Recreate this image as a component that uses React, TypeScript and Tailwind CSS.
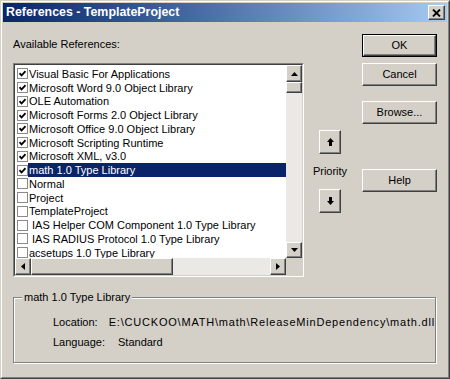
import React from "react";

const items = [
  { name: "Visual Basic For Applications", checked: true },
  { name: "Microsoft Word 9.0 Object Library", checked: true },
  { name: "OLE Automation", checked: true },
  { name: "Microsoft Forms 2.0 Object Library", checked: true },
  { name: "Microsoft Office 9.0 Object Library", checked: true },
  { name: "Microsoft Scripting Runtime", checked: true },
  { name: "Microsoft XML, v3.0", checked: true },
  { name: "math 1.0 Type Library", checked: true, selected: true },
  { name: "Normal", checked: false },
  { name: "Project", checked: false },
  { name: "TemplateProject", checked: false },
  { name: "\u00a0IAS Helper COM Component 1.0 Type Library", checked: false },
  { name: "\u00a0IAS RADIUS Protocol 1.0 Type Library", checked: false },
  { name: "acsetups 1.0 Type Library", checked: false },
];

const raised =
  "border border-t-white border-l-white border-r-[#404040] border-b-[#404040] shadow-[inset_-1px_-1px_0_#808080] bg-[#d4d0c8]";

function Arrow({ dir }: { dir: "up" | "down" | "left" | "right" }) {
  const pts = {
    up: "3.5,0 7,4 0,4",
    down: "0,0 7,0 3.5,4",
    left: "4,0 4,7 0,3.5",
    right: "0,0 4,3.5 0,7",
  }[dir];
  const vertical = dir === "up" || dir === "down";
  return (
    <svg width={vertical ? 7 : 4} height={vertical ? 4 : 7} viewBox={vertical ? "0 0 7 4" : "0 0 4 7"}>
      <polygon points={pts} fill="#000" />
    </svg>
  );
}

function ScrollButton({ dir, className }: { dir: "up" | "down" | "left" | "right"; className: string }) {
  return (
    <div className={`${raised} ${className} flex items-center justify-center shrink-0`}>
      <Arrow dir={dir} />
    </div>
  );
}

function PriorityArrow({ up }: { up: boolean }) {
  return (
    <svg width="7" height="8" viewBox="0 0 7 8">
      {up ? (
        <polygon points="3.5,0 7,4 5,4 5,8 2,8 2,4 0,4" fill="#000" />
      ) : (
        <polygon points="2,0 5,0 5,4 7,4 3.5,8 0,4 2,4" fill="#000" />
      )}
    </svg>
  );
}

function CheckBox({ checked }: { checked: boolean }) {
  return (
    <div className="w-[11px] h-[11px] shrink-0 border border-[#8a8a8a] bg-white flex items-center justify-center">
      {checked && (
        <svg width="7" height="7" viewBox="0 0 7 7">
          <path d="M0.5 3.2 L2.6 5.4 L6.5 1.2" stroke="#000" strokeWidth="1.7" fill="none" />
        </svg>
      )}
    </div>
  );
}

function Button({ label, isDefault }: { label: string; isDefault?: boolean }) {
  return (
    <div
      className={`w-[75px] h-[23px] flex items-center justify-center text-[11px] text-black ${
        isDefault ? "border border-black" : ""
      }`}
    >
      <div className={`${raised} w-full h-full flex items-center justify-center`}>{label}</div>
    </div>
  );
}

export default function App() {
  return (
    <div className="w-[450px] h-[379px] bg-[#d4d0c8] border border-t-[#d4d0c8] border-l-[#d4d0c8] border-r-[#404040] border-b-[#404040] font-['Liberation_Sans',Arial,sans-serif] text-[11px] text-black overflow-hidden">
      <div className="h-full border border-t-white border-l-white border-r-[#808080] border-b-[#808080] p-px flex flex-col">
        {/* Title bar */}
        <div className="h-[19px] shrink-0 bg-gradient-to-r from-[#0a246a] to-[#a6caf0] flex items-center justify-between pl-[3px] pr-[2px]">
          <span className="text-white font-bold text-[12.4px] leading-none">References - TemplateProject</span>
          <div className={`${raised} w-[17px] h-[15px] flex items-center justify-center`}>
            <svg width="9" height="8" viewBox="0 0 9 8">
              <path d="M1 0.5 L8 7.5 M8 0.5 L1 7.5" stroke="#000" strokeWidth="1.8" />
            </svg>
          </div>
        </div>

        {/* Body */}
        <div className="flex pt-[12px] pl-[10px]">
          {/* Left column */}
          <div className="flex flex-col w-[291px]">
            <div className="mt-[4px] h-[13px] leading-[13px]">Available References:</div>
            <div className="mt-[12px] h-[214px] border border-t-[#808080] border-l-[#808080] border-r-white border-b-white">
              <div className="h-full border border-t-[#404040] border-l-[#404040] border-r-[#d4d0c8] border-b-[#d4d0c8] bg-white flex flex-col">
                <div className="flex h-[193px]">
                  <div className="flex-1 overflow-hidden pt-[2px] pl-[2px]">
                    {items.map((it) => (
                      <div key={it.name} className="flex items-center h-[13.75px]">
                        <CheckBox checked={it.checked} />
                        <div
                          className={`flex-1 h-[14px] leading-[14px] pl-px whitespace-nowrap ${
                            it.selected ? "bg-[#0a246a] text-white" : ""
                          }`}
                        >
                          {it.name}
                        </div>
                      </div>
                    ))}
                  </div>
                  <div className="w-[16px] flex flex-col bg-[#ebe9e5]">
                    <ScrollButton dir="up" className="h-[17px]" />
                    <div className={`${raised} h-[11px]`} />
                    <div className="flex-1" />
                    <ScrollButton dir="down" className="h-[16px]" />
                  </div>
                </div>
                <div className="flex h-[17px]">
                  <ScrollButton dir="left" className="w-[16px]" />
                  <div className="flex-1 flex bg-[#ebe9e5]">
                    <div className={`${raised} w-[142px]`} />
                  </div>
                  <ScrollButton dir="right" className="w-[16px]" />
                  <div className="w-[16px] bg-[#d4d0c8]" />
                </div>
              </div>
            </div>
          </div>

          {/* Priority column */}
          <div className="ml-[8px] w-[36px] flex flex-col items-center">
            <div className={`${raised} mt-[96px] w-[22px] h-[24px] flex items-center justify-center`}>
              <PriorityArrow up />
            </div>
            <div className="mt-[11px] h-[13px] leading-[13px]">Priority</div>
            <div className={`${raised} mt-[11px] w-[22px] h-[24px] flex items-center justify-center`}>
              <PriorityArrow up={false} />
            </div>
          </div>

          {/* Buttons */}
          <div className="ml-[14px] flex flex-col">
            <Button label="OK" isDefault />
            <div className="mt-[6px]">
              <Button label="Cancel" />
            </div>
            <div className="mt-[15px]">
              <Button label="Browse..." />
            </div>
            <div className="mt-[45px]">
              <Button label="Help" />
            </div>
          </div>
        </div>

        {/* Group box */}
        <div className="relative mt-[20px] ml-[10px] w-[423px] h-[66px] border border-[#808080] shadow-[inset_1px_1px_0_#fff,1px_1px_0_#fff] pt-[18px] pl-[39px]">
          <div className="absolute left-[8px] top-[-7px] px-[2px] bg-[#d4d0c8] leading-[13px]">math 1.0 Type Library</div>
          <div className="flex h-[13px] leading-[13px]">
            <span className="w-[60px]">Location:</span>
            <span className="tracking-[0.8px]">E:\CUCKOO\MATH\math\ReleaseMinDependency\math.dll</span>
          </div>
          <div className="flex h-[13px] leading-[13px] mt-[7px]">
            <span className="w-[65px]">Language:</span>
            <span>Standard</span>
          </div>
        </div>
      </div>
    </div>
  );
}
